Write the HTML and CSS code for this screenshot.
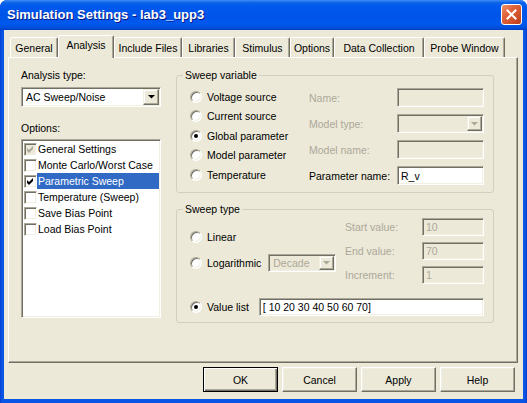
FILE: index.html
```html
<!DOCTYPE html>
<html>
<head>
<meta charset="utf-8">
<title>Simulation Settings</title>
<link rel="stylesheet" href="styles.css">
</head>
<body>
<div class="window">
  <div class="titlebar">
    <span class="title">Simulation Settings - lab3_upp3</span>
    <span class="close"><svg width="11" height="11" viewBox="0 0 11 11"><path d="M1.5 1.5 L9.5 9.5 M9.5 1.5 L1.5 9.5" stroke="#fff" stroke-width="2" stroke-linecap="square"/></svg></span>
  </div>
  <div class="client">
    <div class="tabs">
      <div class="tab">General</div>
      <div class="tab tab-active">Analysis</div>
      <div class="tab">Include Files</div>
      <div class="tab">Libraries</div>
      <div class="tab">Stimulus</div>
      <div class="tab">Options</div>
      <div class="tab">Data Collection</div>
      <div class="tab">Probe Window</div>
    </div>
    <div class="panel">
      <div class="leftcol">
        <div class="label">Analysis type:</div>
        <div class="combo combo-main">
          <span class="combo-text">AC Sweep/Noise</span>
          <span class="combo-btn"><svg width="7" height="4" viewBox="0 0 7 4"><polygon points="0,0 7,0 3.5,3.6" fill="#000"/></svg></span>
        </div>
        <div class="label label-options">Options:</div>
        <div class="listbox">
          <div class="item"><span class="check check-disabled"><svg width="7" height="7" viewBox="0 0 7 7"><polygon points="0,2 2,4 6,0 6,3 2,7 0,5" fill="#ACA899"/></svg></span><span class="item-text">General Settings</span></div>
          <div class="item"><span class="check"></span><span class="item-text">Monte Carlo/Worst Case</span></div>
          <div class="item"><span class="check"><svg width="7" height="7" viewBox="0 0 7 7"><polygon points="0,2 2,4 6,0 6,3 2,7 0,5" fill="#000"/></svg></span><span class="item-text item-selected">Parametric Sweep</span></div>
          <div class="item"><span class="check"></span><span class="item-text">Temperature (Sweep)</span></div>
          <div class="item"><span class="check"></span><span class="item-text">Save Bias Point</span></div>
          <div class="item"><span class="check"></span><span class="item-text">Load Bias Point</span></div>
        </div>
      </div>
      <div class="rightcol">
        <fieldset class="group group-var">
          <legend>Sweep variable</legend>
          <div class="var-body">
            <div class="radios">
              <div class="radio-row"><span class="radio"></span>Voltage source</div>
              <div class="radio-row"><span class="radio"></span>Current source</div>
              <div class="radio-row"><span class="radio radio-on"></span>Global parameter</div>
              <div class="radio-row"><span class="radio"></span>Model parameter</div>
              <div class="radio-row"><span class="radio"></span>Temperature</div>
            </div>
            <div class="fields fields-var">
              <span class="flabel disabled">Name:</span><span class="edit edit-disabled"></span>
              <span class="flabel disabled">Model type:</span>
              <span class="combo combo-disabled"><span class="combo-text"></span><span class="combo-btn combo-btn-disabled"><svg width="7" height="4" viewBox="0 0 7 4"><polygon points="0,0 7,0 3.5,3.6" fill="#ACA899"/></svg></span></span>
              <span class="flabel disabled">Model name:</span><span class="edit edit-disabled"></span>
              <span class="flabel">Parameter name:</span><span class="edit">R_v</span>
            </div>
          </div>
        </fieldset>
        <fieldset class="group group-type">
          <legend>Sweep type</legend>
          <div class="type-body">
            <div class="type-top">
              <div class="type-radios">
                <div class="radio-row type-row"><span class="radio"></span>Linear</div>
                <div class="radio-row type-row"><span class="radio"></span>Logarithmic
                  <span class="combo combo-disabled combo-decade"><span class="combo-text disabled">Decade</span><span class="combo-btn combo-btn-disabled"><svg width="7" height="4" viewBox="0 0 7 4"><polygon points="0,0 7,0 3.5,3.6" fill="#ACA899"/></svg></span></span>
                </div>
              </div>
              <div class="fields fields-type">
                <span class="flabel disabled">Start value:</span><span class="edit edit-disabled disabled">10</span>
                <span class="flabel disabled">End value:</span><span class="edit edit-disabled disabled">70</span>
                <span class="flabel disabled">Increment:</span><span class="edit edit-disabled disabled">1</span>
              </div>
            </div>
            <div class="radio-row value-row"><span class="radio radio-on"></span>Value list<span class="edit value-edit">[ 10 20 30 40 50 60 70]</span></div>
          </div>
        </fieldset>
      </div>
    </div>
    <div class="buttons">
      <span class="btn btn-default">OK</span>
      <span class="btn">Cancel</span>
      <span class="btn">Apply</span>
      <span class="btn">Help</span>
    </div>
  </div>
</div>
</body>
</html>
```
FILE: styles.css
```css
* { box-sizing: border-box; }
html, body { margin: 0; padding: 0; }
body {
  width: 527px;
  height: 403px;
  overflow: hidden;
  background: #ffffff;
  font-family: "Liberation Sans", Arial, sans-serif;
  font-size: 10.5px;
  color: #000;
}
.window {
  width: 527px;
  height: 403px;
  display: flex;
  flex-direction: column;
  background: linear-gradient(to right, #0A3FD0 0, #0855E6 2px, #0855E6 525px, #0A3FC8 527px);
  border-radius: 7px 7px 0 0;
  overflow: hidden;
}
.titlebar {
  height: 30px;
  flex: none;
  display: flex;
  align-items: center;
  padding: 0 5px 0 7px;
  background: linear-gradient(to bottom, #3E8DF3 0%, #0D63E8 9%, #0058EE 22%, #0055E8 55%, #0058EE 80%, #0050DE 92%, #003DC5 100%);
}
.title {
  flex: 1;
  color: #fff;
  font-weight: bold;
  font-size: 13px;
  text-shadow: 1px 1px #0A1883;
  margin-top: -1px;
}
.close {
  width: 21px;
  height: 21px;
  margin-top: -1px;
  border: 1px solid #fff;
  border-radius: 3px;
  background: linear-gradient(135deg, #F0926E 0%, #E0653B 35%, #D0502A 70%, #B93E19 100%);
  display: flex;
  align-items: center;
  justify-content: center;
}
.client {
  flex: 1;
  margin: 0 4px 4px 4px;
  background: #ECE9D8;
  padding: 5px 5px 0 4px;
  display: flex;
  flex-direction: column;
}
.tabs {
  display: flex;
  align-items: flex-end;
  height: 22px;
  padding-left: 2px;
  position: relative;
  z-index: 2;
}
.tab {
  height: 20px;
  display: flex;
  align-items: center;
  justify-content: center;
  border: 1px solid;
  border-bottom: none;
  border-color: #fff #716F64 transparent #fff;
  border-radius: 2px 2px 0 0;
  box-shadow: inset -1px 0 #ACA899;
  background: #ECE9D8;
  white-space: nowrap;
}
.tab:nth-child(1) { width: 48px; }
.tab:nth-child(2) { width: 56px; }
.tab:nth-child(3) { width: 68px; }
.tab:nth-child(4) { width: 53px; }
.tab:nth-child(5) { width: 55px; }
.tab:nth-child(6) { width: 44px; }
.tab:nth-child(7) { width: 90px; }
.tab:nth-child(8) { width: 81px; }
.tab-active {
  height: 23px;
  margin-bottom: -1px;
  padding-bottom: 4px;
}
.panel {
  height: 306px;
  border: 1px solid;
  border-color: #fff #716F64 #716F64 #fff;
  box-shadow: inset -1px -1px #ACA899;
  display: flex;
  align-items: flex-start;
  padding: 11px 0 0 12px;
}
.leftcol {
  width: 140px;
  flex: none;
  display: flex;
  flex-direction: column;
}
.label { line-height: 13px; height: 13px; white-space: nowrap; }
.label-options { margin-top: 15px; }
.sunken {
  border: 1px solid;
}
.combo, .edit, .listbox {
  border: 1px solid;
  border-color: #ACA899 #fff #fff #ACA899;
  box-shadow: inset 1px 1px #716F64, inset -1px -1px #F1EFE2;
  background: #fff;
}
.combo {
  display: flex;
  align-items: stretch;
  padding: 1px;
}
.combo-main {
  margin-top: 5px;
  height: 20px;
}
.combo-text {
  flex: 1;
  display: flex;
  align-items: center;
  padding-left: 3px;
  white-space: nowrap;
  overflow: hidden;
}
.combo-btn {
  width: 16px;
  flex: none;
  display: flex;
  align-items: center;
  justify-content: center;
  background: #ECE9D8;
  border: 1px solid;
  border-color: #F1EFE2 #716F64 #716F64 #F1EFE2;
  box-shadow: inset -1px -1px #ACA899, inset 1px 1px #fff;
}
.combo-disabled { background: #ECE9D8; }
.combo-btn-disabled { width: 15px; }
.listbox {
  margin-top: 4px;
  height: 179px;
  padding: 1px;
}
.item {
  height: 16px;
  display: flex;
  align-items: center;
}
.check {
  width: 13px;
  height: 13px;
  flex: none;
  margin-left: 1px;
  border: 1px solid;
  border-color: #ACA899 #fff #fff #ACA899;
  box-shadow: inset 1px 1px #716F64, inset -1px -1px #F1EFE2;
  background: #fff;
  display: flex;
  align-items: center;
  justify-content: center;
}
.check-disabled { background: #ECE9D8; }
.item-text {
  flex: 1;
  height: 16px;
  line-height: 16px;
  padding-left: 1px;
  white-space: nowrap;
}
.item-selected { background: #316AC5; color: #fff; }
.rightcol {
  width: 318px;
  margin-left: 15px;
  flex: none;
  display: flex;
  flex-direction: column;
}
.group {
  margin: 0;
  padding: 0;
  min-width: 0;
  border: 1px solid #D0D0BF;
  border-radius: 3px;
}
.group legend {
  padding: 0 2px;
  margin-left: 6px;
  line-height: 13px;
}
.group-var { height: 124px; }
.group-type { height: 120px; margin-top: 10px; }
.var-body {
  display: flex;
  padding: 5px 0 0 13px;
}
.radios { width: 119px; flex: none; }
.radio-row {
  height: 19.5px;
  display: flex;
  align-items: center;
  white-space: nowrap;
}
.radio {
  width: 12px;
  height: 12px;
  flex: none;
  margin-right: 5px;
  border-radius: 50%;
  border: 1px solid;
  border-color: #ACA899 #fff #fff #ACA899;
  box-shadow: inset 1px 1px #716F64, inset -1px -1px #F1EFE2;
  background: #fff;
  display: flex;
  align-items: center;
  justify-content: center;
}
.radio-on::after {
  content: "";
  width: 4px;
  height: 4px;
  border-radius: 50%;
  background: #000;
}
.fields {
  display: grid;
  align-items: center;
}
.fields-var {
  grid-template-columns: 88px 87px;
  grid-auto-rows: 19px;
  row-gap: 7px;
  margin-top: 1px;
}
.flabel { white-space: nowrap; }
.disabled { color: #ACA899; }
.edit {
  height: 100%;
  display: flex;
  align-items: center;
  padding-left: 3px;
  white-space: nowrap;
}
.edit-disabled { background: #ECE9D8; }
.fields-var .combo { height: 19px; }
.type-body { padding: 2px 9px 0 13px; }
.type-top { display: flex; }
.type-radios {
  width: 155px;
  flex: none;
  padding-top: 10px;
  display: flex;
  flex-direction: column;
  gap: 8px;
}
.type-row { height: 18px; }
.combo-decade {
  width: 68px;
  height: 18px;
  margin-left: 7px;
}
.fields-type {
  grid-template-columns: 77px 62px;
  grid-auto-rows: 18px;
  row-gap: 6px;
}
.value-row {
  height: 18px;
  margin-top: 14px;
}
.value-edit {
  flex: 1;
  margin-left: 10px;
  height: 18px;
}
.buttons {
  display: flex;
  justify-content: flex-end;
  gap: 4px;
  margin-top: 4px;
  margin-right: 3px;
}
.btn {
  width: 75px;
  height: 25px;
  display: flex;
  align-items: center;
  justify-content: center;
  background: #ECE9D8;
  border: 1px solid;
  border-color: #fff #716F64 #716F64 #fff;
  box-shadow: inset -1px -1px #ACA899, inset 1px 1px #F1EFE2;
}
.btn-default {
  border-color: #000;
  box-shadow: inset 1px 1px #fff, inset -1px -1px #716F64, inset -2px -2px #ACA899;
}
```
